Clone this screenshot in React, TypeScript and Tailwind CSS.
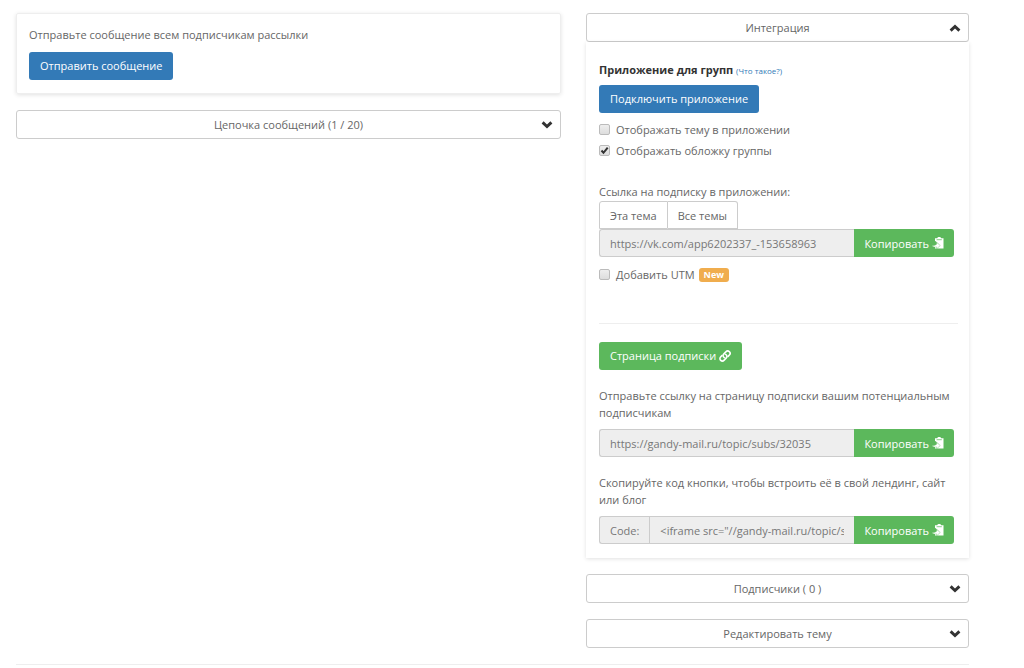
import { useState } from 'react';
import type { ReactNode } from 'react';

const buttonBase = 'h-7 rounded-[3px] px-[11px] text-[11px] leading-[18px] whitespace-nowrap text-white cursor-pointer';

function Chevron({ open }: { open: boolean }) {
  return (
    <svg aria-hidden="true" viewBox="0 0 12 8" className="h-2 w-3 text-[#333]" fill="currentColor">
      {open ? (
        <path d="M6 0.4 11.4 5.6 9.4 7.7 6 4.5 2.6 7.7 0.6 5.6Z" />
      ) : (
        <path d="M6 7.6 0.6 2.4 2.6 0.3 6 3.5 9.4 0.3 11.4 2.4Z" />
      )}
    </svg>
  );
}

function SectionToggle({ open = false, children }: { open?: boolean; children: ReactNode }) {
  return (
    <button
      type="button"
      aria-expanded={open}
      className="flex h-[29px] w-full cursor-pointer items-center rounded-[3px] border border-[#ccc] bg-white pr-[7px] pl-[19px] text-[11px] text-[#666]"
    >
      <span className="flex-1 text-center">{children}</span>
      <Chevron open={open} />
    </button>
  );
}

function CopyIcon() {
  return (
    <svg aria-hidden="true" viewBox="0 0 12 12" className="h-3 w-3 shrink-0" fill="currentColor">
      <path d="M3 1.3H5.200C5.400.5 6.200 0 7.200 0s1.800.5 2 1.300h2.300V11.500H3Z" />
      <path d="M4.600 2.700h5.200" stroke="#5cb85c" strokeWidth="0.7" />
      <path d="M0 4h3.400L6.500 7v2H0Z" fill="#5cb85c" />
      <path d="M4.600 5.300 8.300 8.500 4.600 11.800V9.900C2.800 10.400.8 10 0 8.400c1.700.3 3.400-.2 4.600-1.200Z" stroke="#5cb85c" strokeWidth="0.4" />
    </svg>
  );
}

function LinkIcon() {
  return (
    <svg aria-hidden="true" viewBox="0 0 12 12" className="h-3 w-3 shrink-0" fill="none" stroke="currentColor" strokeWidth="1.6" strokeLinecap="round">
      <path d="M5.300 7.600C3.900 6.900 3.700 5.200 4.700 4.100L6.800 1.900c1-1.100 2.500-1.200 3.500-.3s1 2.400.1 3.400L9.100 6.400" />
      <path d="M6.700 4.400C8.100 5.100 8.300 6.800 7.300 7.900L5.200 10.100c-1 1.100-2.500 1.200-3.500.3s-1-2.400-.1-3.400L2.900 5.600" />
    </svg>
  );
}

function Checkbox({ label, initial = false, children }: { label: string; initial?: boolean; children?: ReactNode }) {
  const [checked, setChecked] = useState(initial);
  return (
    <label className="flex h-[21px] w-fit items-center text-[11px]">
      <span className="mr-[6px] grid">
        <input
          type="checkbox"
          checked={checked}
          onChange={() => setChecked(!checked)}
          className="col-start-1 row-start-1 size-[11px] appearance-none rounded-[2px] border border-[#bbb] bg-linear-to-b from-[#eee] to-[#ddd]"
        />
        {checked && (
          <svg aria-hidden="true" viewBox="0 0 11 11" className="pointer-events-none col-start-1 row-start-1 size-[11px]" fill="none" stroke="#333" strokeWidth="2">
            <path d="M2.500 5.500 4.500 7.800 8.700 2.600" />
          </svg>
        )}
      </span>
      {label}
      {children}
    </label>
  );
}

function CopyField({ label, value, prefix }: { label: string; value: string; prefix?: string }) {
  return (
    <div className="mr-1 flex h-7 text-[11px]">
      {prefix && (
        <span className="flex items-center rounded-l-[3px] border border-r-0 border-[#ccc] bg-[#eee] px-[10px] text-[#777]">{prefix}</span>
      )}
      <input
        readOnly
        aria-label={label}
        value={value}
        className={`min-w-0 flex-1 border border-r-0 border-[#ccc] bg-[#eee] px-[10px] text-[#777] outline-none ${prefix ? '' : 'rounded-l-[3px]'}`}
      />
      <button type="button" className="flex cursor-pointer items-center gap-[3px] rounded-r-[3px] bg-[#5cb85c] px-[10px] text-white">
        Копировать
        <CopyIcon />
      </button>
    </div>
  );
}

export default function App() {
  return (
    <main className="bg-white pt-[13px] pr-[55px] pb-1 pl-4 font-['Open_Sans',sans-serif] text-[11px] leading-[17px] text-[#666]">
      <div className="grid grid-cols-[545fr_383fr] items-start gap-[25px]">
        <div className="flex min-w-0 flex-col gap-4">
          <section className="rounded-[2px] border border-[#eee] px-3 pt-3 pb-[13px] shadow-[0_1px_4px_rgba(0,0,0,0.12)]">
            <p className="mb-[9px]">Отправьте сообщение всем подписчикам рассылки</p>
            <button type="button" className={`${buttonBase} bg-[#337ab7]`}>Отправить сообщение</button>
          </section>
          <SectionToggle>Цепочка сообщений (1 / 20)</SectionToggle>
        </div>

        <div className="flex min-w-0 flex-col gap-4">
          <div>
            <SectionToggle open>Интеграция</SectionToggle>
            <section className="pt-[19px] pr-[11px] pb-[14px] pl-[13px] shadow-[0_1px_4px_rgba(0,0,0,0.12)]">
              <h2 className="mb-[6px] text-[11px]">
                <b className="font-bold text-[#333]">Приложение для групп</b>{' '}
                <a href="#about" className="text-[8px] text-[#337ab7]">(Что такое?)</a>
              </h2>
              <button type="button" className={`${buttonBase} mb-[6px] block bg-[#337ab7]`}>Подключить приложение</button>
              <Checkbox label="Отображать тему в приложении" />
              <Checkbox label="Отображать обложку группы" initial />

              <p className="mt-[22px] mb-px">Ссылка на подписку в приложении:</p>
              <div className="flex h-7">
                <button type="button" className="cursor-pointer rounded-tl-[3px] border border-[#ccc] px-[10px]">Эта тема</button>
                <button type="button" className="cursor-pointer rounded-tr-[3px] border border-l-0 border-[#ccc] px-[10px]">Все темы</button>
              </div>
              <CopyField label="Ссылка на подписку" value="https://vk.com/app6202337_-153658963" />
              <div className="mt-[7px]">
                <Checkbox label="Добавить UTM">
                  <span className="ml-1 rounded-[3px] bg-[#f0ad4e] px-[5px] text-[9px] leading-[14px] font-bold text-white">New</span>
                </Checkbox>
              </div>

              <hr className="mt-[38px] mb-[18px] border-[#eee]" />

              <button type="button" className={`${buttonBase} mb-[17px] flex items-center gap-[3px] bg-[#5cb85c]`}>
                Страница подписки
                <LinkIcon />
              </button>
              <p className="mb-2">Отправьте ссылку на страницу подписки вашим потенциальным подписчикам</p>
              <CopyField label="Ссылка на страницу подписки" value="https://gandy-mail.ru/topic/subs/32035" />
              <p className="mt-[17px] mb-2">Скопируйте код кнопки, чтобы встроить её в свой лендинг, сайт или блог</p>
              <CopyField label="Код кнопки" prefix="Code:" value={'<iframe src="//gandy-mail.ru/topic/subs/32035"></iframe>'} />
            </section>
          </div>
          <SectionToggle>Подписчики ( 0 )</SectionToggle>
          <SectionToggle>Редактировать тему</SectionToggle>
        </div>
      </div>
      <hr className="mt-4 border-[#eee]" />
    </main>
  );
}
